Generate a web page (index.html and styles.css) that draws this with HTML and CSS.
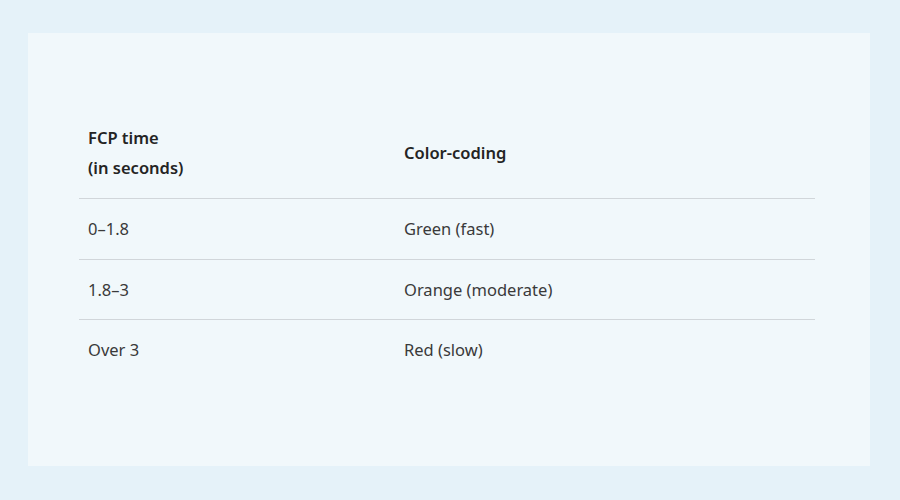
FILE: index.html
```html
<!DOCTYPE html>
<html>
<head>
<meta charset="utf-8">
<link rel="stylesheet" href="styles.css">
</head>
<body>
<div class="panel">
  <table class="tbl">
    <thead>
      <tr><th class="c1">FCP time<br>(in seconds)</th><th>Color-coding</th></tr>
    </thead>
    <tbody>
      <tr><td class="c1">0–1.8</td><td>Green (fast)</td></tr>
      <tr class="r2"><td class="c1">1.8–3</td><td>Orange (moderate)</td></tr>
      <tr><td class="c1">Over 3</td><td>Red (slow)</td></tr>
    </tbody>
  </table>
</div>
</body>
</html>
```
FILE: styles.css
```css
html, body { margin: 0; padding: 0; }
body {
  width: 900px;
  height: 500px;
  background: #e5f2f9;
  font-family: "Noto Sans", "Open Sans", sans-serif;
  padding: 33px 30px 34px 28px;
  box-sizing: border-box;
}
.panel {
  background: #f1f8fb;
  height: 433px;
  width: 842px;
  box-sizing: border-box;
  padding: 75px 55px 0 51px;
}
.tbl {
  width: 736px;
  border-collapse: collapse;
  font-size: 16.5px;
  line-height: 30px;
}
.tbl th, .tbl td {
  text-align: left;
  vertical-align: middle;
  padding: 15px 9px;
}
.tbl th {
  font-weight: 600;
  color: #242424;
  border-bottom: 1px solid #d1d6da;
}
.tbl td {
  font-weight: 400;
  color: #3a3a3a;
}
.tbl tbody tr + tr td { border-top: 1px solid #d1d6da; }
.tbl .r2 td { padding-bottom: 14px; }
.c1 { width: 298px; }
```
